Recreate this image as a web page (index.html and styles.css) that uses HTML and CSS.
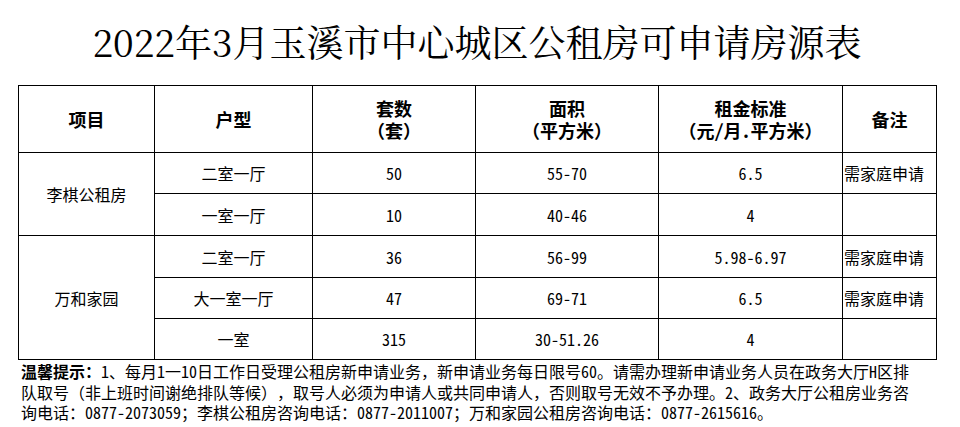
FILE: index.html
```html
<!DOCTYPE html>
<html lang="zh-CN">
<head>
<meta charset="utf-8">
<link rel="stylesheet" href="styles.css">
</head>
<body>
<div class="page">
  <h1 class="title">2022年3月玉溪市中心城区公租房可申请房源表</h1>
  <table class="grid">
    <colgroup>
      <col class="c1"><col class="c2"><col class="c3"><col class="c4"><col class="c5"><col class="c6">
    </colgroup>
    <thead>
      <tr class="head">
        <th>项目</th>
        <th>户型</th>
        <th><div>套数</div><div>（套）</div></th>
        <th><div>面积</div><div>（平方米）</div></th>
        <th><div>租金标准</div><div>（元/月.平方米）</div></th>
        <th>备注</th>
      </tr>
    </thead>
    <tbody>
      <tr class="r41">
        <td rowspan="2">李棋公租房</td>
        <td>二室一厅</td>
        <td>50</td>
        <td>55-70</td>
        <td>6.5</td>
        <td class="note">需家庭申请</td>
      </tr>
      <tr class="r42">
        <td>一室一厅</td>
        <td>10</td>
        <td>40-46</td>
        <td>4</td>
        <td class="note"></td>
      </tr>
      <tr class="r42">
        <td rowspan="3">万和家园</td>
        <td>二室一厅</td>
        <td>36</td>
        <td>56-99</td>
        <td>5.98-6.97</td>
        <td class="note">需家庭申请</td>
      </tr>
      <tr class="r41">
        <td>大一室一厅</td>
        <td>47</td>
        <td>69-71</td>
        <td>6.5</td>
        <td class="note">需家庭申请</td>
      </tr>
      <tr class="r41">
        <td>一室</td>
        <td>315</td>
        <td>30-51.26</td>
        <td>4</td>
        <td class="note"></td>
      </tr>
    </tbody>
  </table>
  <p class="tips"><b>温馨提示：</b>1、每月1一10日工作日受理公租房新申请业务，新申请业务每日限号60。请需办理新申请业务人员在政务大厅H区排<br>队取号（非上班时间谢绝排队等候），取号人必须为申请人或共同申请人，否则取号无效不予办理。2、政务大厅公租房业务咨<br>询电话：0877-2073059；李棋公租房咨询电话：0877-2011007；万和家园公租房咨询电话：0877-2615616。</p>
</div>
</body>
</html>
```
FILE: styles.css
```css
html, body {
  margin: 0;
  padding: 0;
  background: #fff;
  color: #000;
}
.page {
  width: 918px;
  padding-left: 18px;
  text-spacing-trim: space-all;
}
.title {
  margin: 0;
  height: 85px;
  line-height: 82px;
  text-align: center;
  font-family: "Noto Serif CJK SC", "Liberation Serif", "Noto Sans CJK SC", serif;
  font-weight: normal;
  font-size: 37px;
  white-space: nowrap;
}
.grid {
  width: 918px;
  border-collapse: collapse;
  table-layout: fixed;
  font-family: "Noto Sans Mono CJK SC", "Noto Sans CJK SC", monospace;
  font-size: 16px;
}
.c1 { width: 136px; }
.c2 { width: 158px; }
.c3 { width: 163px; }
.c4 { width: 183px; }
.c5 { width: 184px; }
.c6 { width: 94px; }
.grid th, .grid td {
  border: 1px solid #000;
  padding: 0;
  text-align: center;
  vertical-align: middle;
}
.grid th {
  font-family: "Noto Sans Mono CJK SC", "Noto Sans CJK SC", sans-serif;
  font-weight: 700;
  font-size: 18px;
  line-height: 22px;
}
.head { height: 67px; }
.r41 { height: 41px; }
.r42 { height: 42px; }
.grid td.note {
  text-align: left;
  padding-left: 1px;
  white-space: nowrap;
}
.tips {
  margin: 1px 0 0 3px;
  font-family: "Noto Sans Mono CJK SC", "Noto Sans CJK SC", monospace;
  font-size: 16px;
  line-height: 20.5px;
  white-space: nowrap;
}
.tips b {
  font-family: "Noto Sans CJK SC", sans-serif;
  font-weight: 700;
}
```
